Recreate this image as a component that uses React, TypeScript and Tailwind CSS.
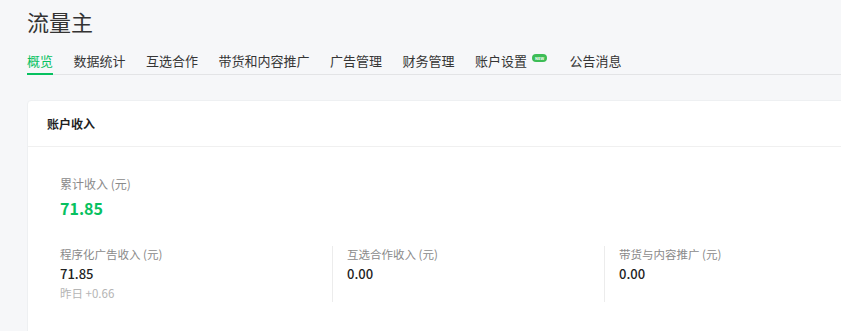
import React from 'react';

const tabs = ['概览', '数据统计', '互选合作', '带货和内容推广', '广告管理', '财务管理', '账户设置', '公告消息'];

const stats = [
  { label: '程序化广告收入 (元)', value: '71.85', extra: '昨日 +0.66' },
  { label: '互选合作收入 (元)', value: '0.00' },
  { label: '带货与内容推广 (元)', value: '0.00' },
];

export default function App() {
  return (
    <div
      className="w-[841px] h-[331px] overflow-hidden bg-[#f6f7f9] pl-[27px] text-[#353535]"
      style={{ fontFamily: '"Noto Sans CJK SC", "Noto Sans", sans-serif' }}
    >
      <h1 className="pt-[6px] text-[22px] leading-[30px] font-normal text-[#333]">流量主</h1>

      <nav className="mt-[15px] flex gap-[20.5px] border-b border-[#e3e4e6]">
        {tabs.map((t, i) => (
          <div key={t} className="relative flex items-start pb-[3px]">
            <span className={`text-[13px] leading-[20px] ${i === 0 ? 'text-[#07c160]' : 'text-[#353535]'}`}>{t}</span>
            {t === '账户设置' && (
              <span className="ml-[5px] mr-[2px] mt-[3px] flex h-[8px] w-[15px] items-center justify-center rounded-full bg-[#3dbd56] text-[4px] font-bold leading-none text-white">
                NEW
              </span>
            )}
            {i === 0 && <span className="absolute bottom-[-1px] left-0 right-0 h-[2px] bg-[#07c160]" />}
          </div>
        ))}
      </nav>

      <div className="mt-[25px] w-[900px] rounded-[4px] border border-[#eef0f2] bg-white">
        <div className="flex h-[46px] items-center border-b border-[#f0f0f0] px-[19px]">
          <span className="text-[12px] font-semibold text-[#1f1f1f]">账户收入</span>
        </div>
        <div className="px-[32px] pt-[28px] pb-[40px]">
          <div className="text-[12px] leading-[18px] text-[#8a8a8a]">累计收入 (元)</div>
          <div className="mt-[3px] text-[16px] leading-[24px] font-semibold text-[#07c160]">71.85</div>

          <div className="mt-[26px] flex">
            {stats.map((s, i) => (
              <div
                key={s.label}
                className={`w-[272px] h-[56px] ${i > 0 ? 'border-l border-[#ececec] pl-[14px]' : ''}`}
              >
                <div className="text-[11.5px] leading-[16px] text-[#8a8a8a]">{s.label}</div>
                <div className="mt-[2px] text-[13px] leading-[20px] font-medium text-[#222]">{s.value}</div>
                {s.extra && <div className="mt-[1px] text-[11.5px] leading-[16px] text-[#b5b5b5]">{s.extra}</div>}
              </div>
            ))}
          </div>
        </div>
      </div>
    </div>
  );
}
